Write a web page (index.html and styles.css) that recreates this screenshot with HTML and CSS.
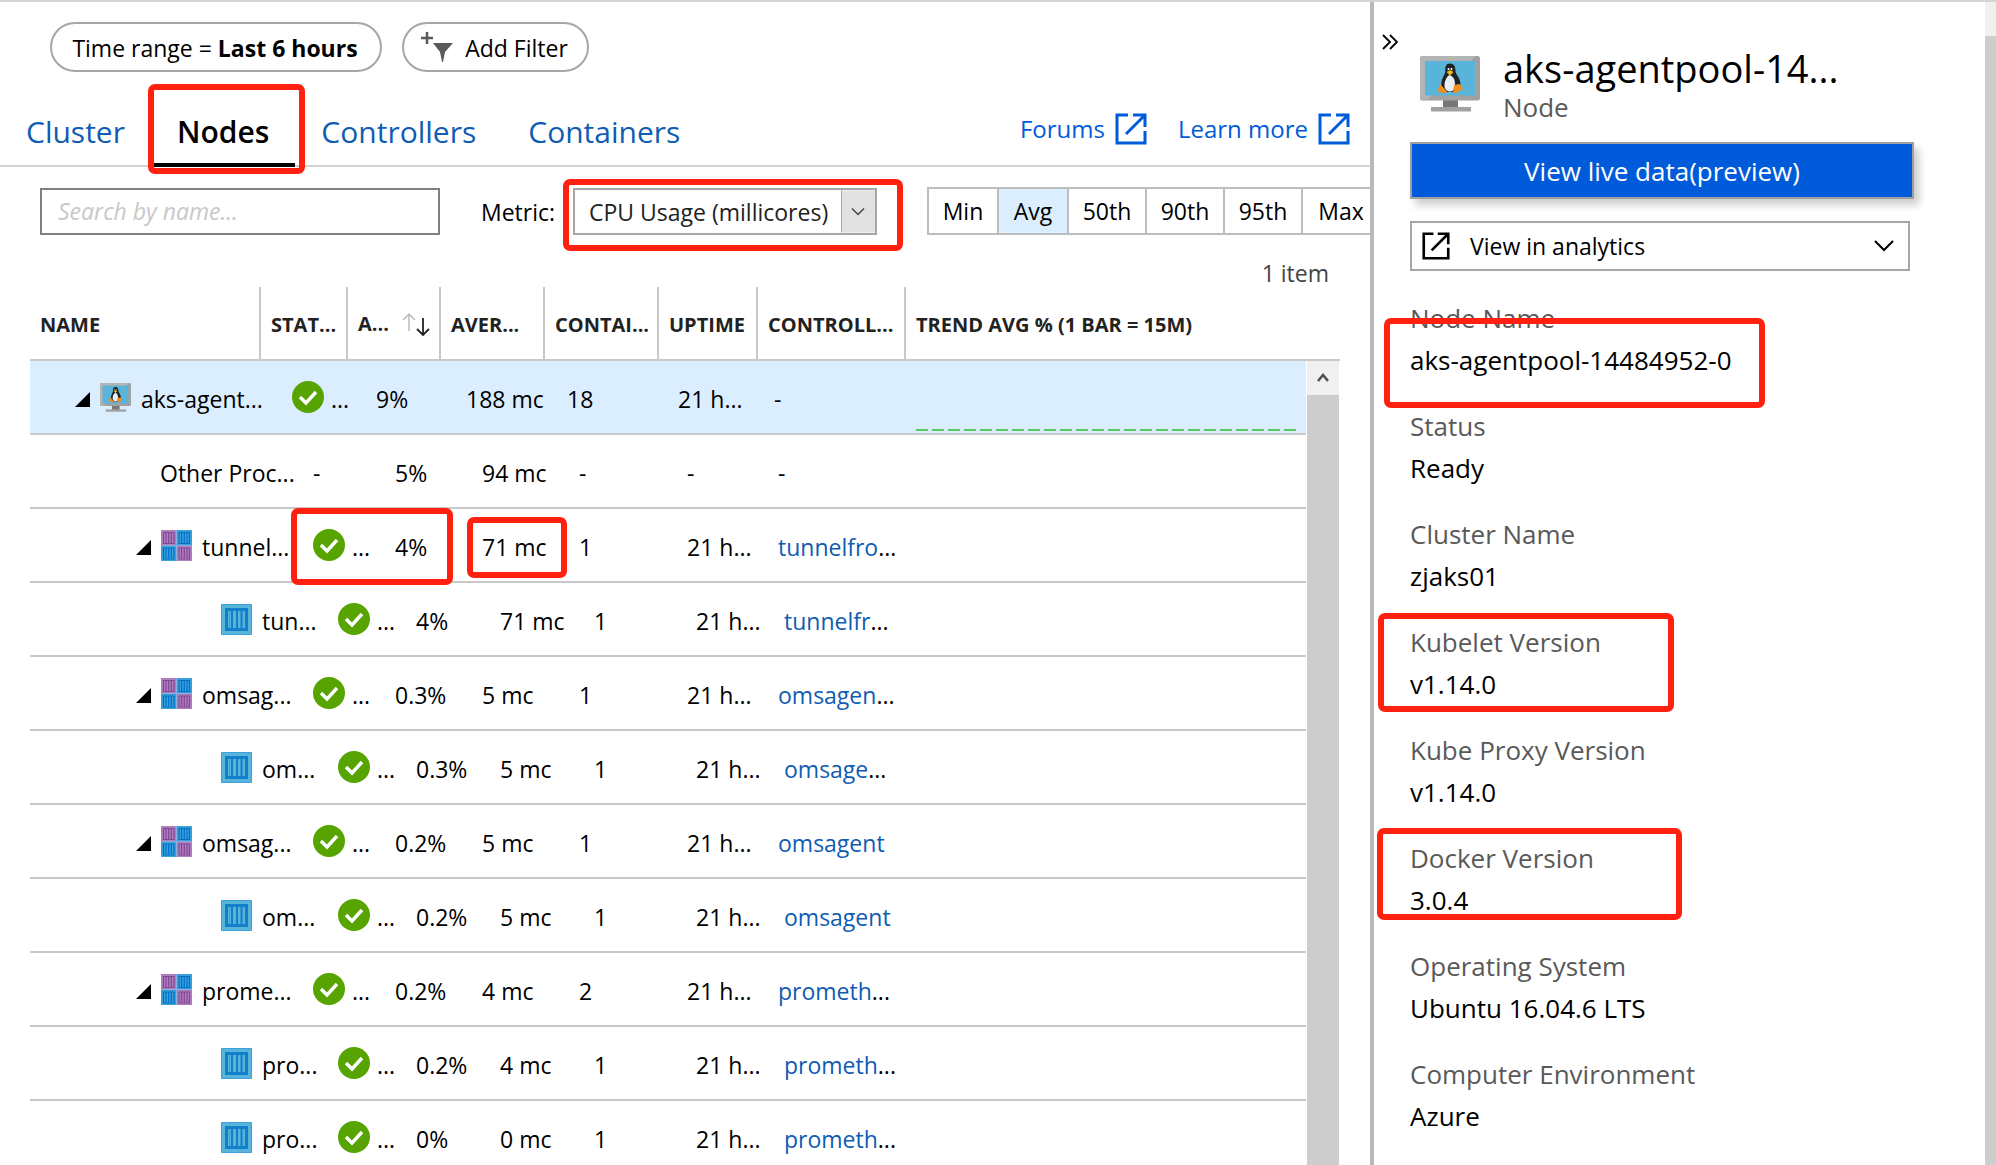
FILE: index.html
```html
<!DOCTYPE html>
<html lang="en">
<head>
<meta charset="utf-8">
<title>Container insights - Nodes</title>
<link rel="stylesheet" href="styles.css">
</head>
<body>
<svg class="sprite" aria-hidden="true">
  <symbol id="i-open" viewBox="0 0 32 32"><path d="M13 2H2v28h28V18M30 14V2H18M30 2 11 21" fill="none" stroke="currentColor" stroke-width="3"/></symbol>
  <symbol id="i-check" viewBox="0 0 32 32"><circle cx="16" cy="16" r="16" fill="#57a300"/><path d="m8 16 6 6L24 11" fill="none" stroke="#fff" stroke-width="3.4"/></symbol>
  <symbol id="i-tri" viewBox="0 0 15 15"><path d="M15 0v15H0z" fill="#000"/></symbol>
  <symbol id="i-node" viewBox="0 0 60 56">
    <path d="M23 44h15v8H23z" fill="#767676"/><path d="M11 51h40v4.500H11z" fill="#a0a1a2"/>
    <rect width="60" height="44.500" rx="2.500" fill="#a0a1a2"/><path d="M0 42V2.500Q0 0 2.500 0H56L6 44.500H2.500Q0 44.500 0 42z" fill="#b3b4b5"/>
    <path d="M5 5h50v34.500H5z" fill="#59b4d9"/><circle cx="30" cy="2.500" r="1" fill="#b8d432"/>
    <path d="M30 7.500c-4 0-5 3-4.700 7.500.2 3-3.800 7-4 13 0 4 1.700 7 3.200 8h11c2-1 5-4 5-8 0-6-4.700-9-5-13 0-4.500-1.500-7.500-5.500-7.500z" fill="#1f2326"/>
    <path d="M29.500 19c-2 1-5 5-5 10 0 4.500 2.500 6.500 5.500 6.500s5-2 5-7c0-5-2-8.500-5.500-9.500z" fill="#e9eef2"/>
    <circle cx="28.500" cy="13" r="1" fill="#fff"/><circle cx="31.500" cy="13" r="1" fill="#fff"/>
    <path d="m26.500 16 3.500-2 3.500 2-3.500 3.500z" fill="#f3b71b"/>
    <path d="m20 28 7 7.500-2 1.500-7-1 .5-3.500z" fill="#ef8e1c"/><path d="m34 29 6-1 3 5-7 4h-3z" fill="#ef8e1c"/>
  </symbol>
  <symbol id="i-pod" viewBox="0 0 31 31">
    <path d="M0 0h15.500v15.500H0zM15.500 15.500H31V31H15.500z" fill="#b07dbd"/>
    <path d="M15.500 0H31v15.500H15.500zM0 15.500h15.500V31H0z" fill="#3aa0dc"/>
    <path d="M2.500 2.500h10.500v11H2.500zM5 3v10M7.700 3v10M10.400 3v10M18 18h10.500v11H18zM20.600 18v10M23.300 18v10M26 18v10" fill="none" stroke="#804998" stroke-width="1.200"/>
    <path d="M18 2.500h10.500v11H18zM20.600 3v10M23.300 3v10M26 3v10M2.500 18h10.500v11H2.500zM5 18v10M7.700 18v10M10.400 18v10" fill="none" stroke="#0072c6" stroke-width="1.200"/>
  </symbol>
  <symbol id="i-box" viewBox="0 0 31 31">
    <path d="M.5.500h30v30H.5z" fill="#59b4d9" stroke="#3a9fdc"/>
    <path d="M4 4h23v23H4z" fill="#0072c6" opacity=".8"/>
    <path d="M7 7h3v17H7zM12 7h3v17h-3zM17 7h2.500v17H17zM21.500 7H24v17h-2.500z" fill="#59b4d9"/>
    <path d="M8 7h1v17H8z" fill="#3a9fdc"/>
  </symbol>
</svg>
<div class="shell">
  <main class="main">
    <div class="filters">
      <button class="pill">Time range = <b>Last 6 hours</b></button>
      <button class="pill pill-add">
        <svg class="funnel" viewBox="0 0 32 32" aria-hidden="true"><path d="M6 0v12M0 6h12" stroke="#5a5a5a" stroke-width="2.500" fill="none"/><path d="M12 11h20l-8 9-2 10h-1l-2-10z" fill="#5a5a5a"/></svg>Add Filter
      </button>
    </div>
    <div class="tabbar">
      <nav class="tabs">
        <a href="#cluster">Cluster</a>
        <a href="#nodes" class="active">Nodes<i class="mark mark-tab"></i></a>
        <a href="#controllers">Controllers</a>
        <a href="#containers">Containers</a>
      </nav>
      <div class="links">
        <a href="#forums">Forums <svg aria-hidden="true"><use href="#i-open"/></svg></a>
        <a href="#learn">Learn more <svg aria-hidden="true"><use href="#i-open"/></svg></a>
      </div>
    </div>
    <div class="tools">
      <input class="search" type="text" placeholder="Search by name..." aria-label="Search by name">
      <div class="metric">
        <label for="metric">Metric:</label>
        <div class="select">
          <select id="metric"><option>CPU Usage (millicores)</option></select>
          <svg viewBox="0 0 34 42" aria-hidden="true"><path d="M0 0h34v42H0z" fill="#e1e1e1"/><path d="M.5 0v42" stroke="#a6a6a6"/><path d="m11 18 6 6 6-6" fill="none" stroke="#444" stroke-width="1.500"/></svg>
          <i class="mark mark-metric"></i>
        </div>
      </div>
      <div class="segments" role="group" aria-label="Aggregation">
        <button>Min</button><button class="on" aria-pressed="true">Avg</button><button>50th</button><button>90th</button><button>95th</button><button>Max</button>
      </div>
    </div>
    <p class="count">1 item</p>
    <div class="grid">
      <table>
        <thead>
          <tr>
            <th>NAME</th><th>STAT...</th>
            <th class="sorted">A...<svg viewBox="0 0 28 24" aria-hidden="true"><path d="M7 19V2M1 8l6-6 6 6" fill="none" stroke="#bbb" stroke-width="1.500"/><path d="M21 6v17M15 17l6 6 6-6" fill="none" stroke="#222" stroke-width="1.800"/></svg></th>
            <th>AVER...</th><th>CONTAI...</th><th>UPTIME</th><th>CONTROLL...</th><th>TREND AVG % (1 BAR = 15M)</th>
          </tr>
        </thead>
        <tbody>
          <tr class="l0">
            <td><svg class="tri"><use href="#i-tri"/></svg><svg class="ico"><use href="#i-node"/></svg>aks-agent...</td>
            <td><svg class="ok"><use href="#i-check"/></svg>...</td><td>9%</td><td>188 mc</td><td>18</td><td>21 h...</td><td>-</td>
            <td class="trend"><svg viewBox="0 0 380 2" preserveAspectRatio="none" aria-label="Trend"><path d="M0 1h380" stroke="#5ec45e" stroke-width="2" stroke-dasharray="12 4"/></svg></td>
          </tr>
          <tr class="l1 plain"><td>Other Proc...</td><td>-</td><td>5%</td><td>94 mc</td><td>-</td><td>-</td><td>-</td><td></td></tr>
          <tr class="l1">
            <td><svg class="tri"><use href="#i-tri"/></svg><svg class="ico"><use href="#i-pod"/></svg>tunnel...</td>
            <td><svg class="ok"><use href="#i-check"/></svg>...<i class="mark mark-status"></i></td><td>4%</td><td>71 mc<i class="mark mark-usage"></i></td><td>1</td><td>21 h...</td><td><a href="#c1">tunnelfro</a>...</td><td></td>
          </tr>
          <tr class="l2">
            <td><svg class="ico"><use href="#i-box"/></svg>tun...</td>
            <td><svg class="ok"><use href="#i-check"/></svg>...</td><td>4%</td><td>71 mc</td><td>1</td><td>21 h...</td><td><a href="#c2">tunnelfr</a>...</td><td></td>
          </tr>
          <tr class="l1">
            <td><svg class="tri"><use href="#i-tri"/></svg><svg class="ico"><use href="#i-pod"/></svg>omsag...</td>
            <td><svg class="ok"><use href="#i-check"/></svg>...</td><td>0.3%</td><td>5 mc</td><td>1</td><td>21 h...</td><td><a href="#c3">omsagen</a>...</td><td></td>
          </tr>
          <tr class="l2">
            <td><svg class="ico"><use href="#i-box"/></svg>om...</td>
            <td><svg class="ok"><use href="#i-check"/></svg>...</td><td>0.3%</td><td>5 mc</td><td>1</td><td>21 h...</td><td><a href="#c4">omsage</a>...</td><td></td>
          </tr>
          <tr class="l1">
            <td><svg class="tri"><use href="#i-tri"/></svg><svg class="ico"><use href="#i-pod"/></svg>omsag...</td>
            <td><svg class="ok"><use href="#i-check"/></svg>...</td><td>0.2%</td><td>5 mc</td><td>1</td><td>21 h...</td><td><a href="#c5">omsagent</a></td><td></td>
          </tr>
          <tr class="l2">
            <td><svg class="ico"><use href="#i-box"/></svg>om...</td>
            <td><svg class="ok"><use href="#i-check"/></svg>...</td><td>0.2%</td><td>5 mc</td><td>1</td><td>21 h...</td><td><a href="#c6">omsagent</a></td><td></td>
          </tr>
          <tr class="l1">
            <td><svg class="tri"><use href="#i-tri"/></svg><svg class="ico"><use href="#i-pod"/></svg>prome...</td>
            <td><svg class="ok"><use href="#i-check"/></svg>...</td><td>0.2%</td><td>4 mc</td><td>2</td><td>21 h...</td><td><a href="#c7">prometh</a>...</td><td></td>
          </tr>
          <tr class="l2">
            <td><svg class="ico"><use href="#i-box"/></svg>pro...</td>
            <td><svg class="ok"><use href="#i-check"/></svg>...</td><td>0.2%</td><td>4 mc</td><td>1</td><td>21 h...</td><td><a href="#c8">prometh</a>...</td><td></td>
          </tr>
          <tr class="l2">
            <td><svg class="ico"><use href="#i-box"/></svg>pro...</td>
            <td><svg class="ok"><use href="#i-check"/></svg>...</td><td>0%</td><td>0 mc</td><td>1</td><td>21 h...</td><td><a href="#c9">prometh</a>...</td><td></td>
          </tr>
        </tbody>
      </table>
      <div class="scroll" aria-hidden="true"><svg viewBox="0 0 32 34"><path d="m11 20 5-6 5 6" fill="none" stroke="#505050" stroke-width="2.500"/></svg></div>
    </div>
  </main>
  <aside class="panel">
    <button class="collapse" aria-label="Collapse panel"><svg viewBox="0 0 16 16"><path d="m1 1 7 7-7 7M8 1l7 7-7 7" fill="none" stroke="#000" stroke-width="1.800"/></svg></button>
    <div class="details">
      <header>
        <svg class="node"><use href="#i-node"/></svg>
        <div><h1>aks-agentpool-14...</h1><p>Node</p></div>
      </header>
      <button class="live">View live data(preview)</button>
      <button class="analytics"><svg class="open"><use href="#i-open"/></svg>View in analytics<svg class="chev" viewBox="0 0 20 12"><path d="m1 1 9 9 9-9" fill="none" stroke="#000" stroke-width="2"/></svg></button>
      <dl>
        <div><dt>Node Name</dt><dd>aks-agentpool-14484952-0</dd><i class="mark mark-name"></i></div>
        <div><dt>Status</dt><dd>Ready</dd></div>
        <div><dt>Cluster Name</dt><dd>zjaks01</dd></div>
        <div><dt>Kubelet Version</dt><dd>v1.14.0</dd><i class="mark mark-kubelet"></i></div>
        <div><dt>Kube Proxy Version</dt><dd>v1.14.0</dd></div>
        <div><dt>Docker Version</dt><dd>3.0.4</dd><i class="mark mark-docker"></i></div>
        <div><dt>Operating System</dt><dd>Ubuntu 16.04.6 LTS</dd></div>
        <div><dt>Computer Environment</dt><dd>Azure</dd></div>
      </dl>
    </div>
    <div class="scroll" aria-hidden="true"></div>
  </aside>
</div>
</body>
</html>
```
FILE: styles.css
```css
* { box-sizing: border-box; }
body { margin: 0; font: 23px/32px "Open Sans", "Noto Sans", sans-serif; color: #000; background: #fff; }
button, input, select { font: inherit; color: inherit; }
button { background: none; border: 0; padding: 0; }
a { color: #0f5cb3; text-decoration: none; }
svg { flex: none; display: block; }
.sprite { position: absolute; width: 0; height: 0; }
.shell { display: grid; grid-template-columns: minmax(0, 1fr) 626px; height: 100vh; overflow: hidden; border-top: 2px solid #d4d4d4; }
.main { display: flex; flex-direction: column; min-width: 0; min-height: 0; overflow: hidden; }

.filters { display: flex; gap: 20px; padding: 20px 50px 0; }
.pill { display: flex; align-items: center; justify-content: center; gap: 6px; width: 332px; height: 50px; padding: 2px 2px 0 0; border: 2px solid #a6a6a6; border-radius: 25px; white-space: nowrap; }
.pill b { font-weight: 700; }
.pill-add { width: 187px; gap: 12px; }
.funnel { width: 32px; height: 32px; }

.tabbar { display: flex; justify-content: space-between; height: 95px; border-bottom: 2px solid #d4d4d4; }
.tabs { display: flex; }
.tabs a { position: relative; padding: 38px 26px 0; font-size: 30px; line-height: 44px; margin-bottom: -2px; }
.tabs .active { color: #000; font-weight: 600; border-bottom: 4px solid #000; }
.links { display: flex; gap: 31px; padding: 41px 20px 0 0; }
.links a { display: flex; align-items: center; gap: 10px; height: 32px; font-size: 24px; color: #005bda; }
.links svg { width: 32px; height: 32px; }

.tools { display: flex; padding: 20px 0 0 40px; height: 68px; }
.search { flex: none; width: 400px; height: 47px; border: 2px solid #808080; padding: 0 16px 2px; margin-top: 1px; }
.search::placeholder { color: #c8c8c8; font-style: italic; opacity: 1; }
.metric { display: grid; grid-template-columns: 92px 304px; align-items: center; height: 49px; margin-left: 41px; }
.select { position: relative; display: flex; }
.select select { appearance: none; width: 100%; height: 47px; border: 2px solid #a6a6a6; border-radius: 0; background: #fff; padding: 0 36px 0 14px; color: #222; }
.select svg { position: absolute; right: 2px; top: 2px; width: 34px; height: 43px; }
.segments { display: flex; flex: none; height: 48px; margin-left: 50px; border: 2px solid #bdbdbd; }
.segments button { width: 78px; border-right: 2px solid #bdbdbd; }
.segments button:nth-child(-n+2) { width: 70px; }
.segments .on { background: #dbeeff; }
.count { margin: 22px 41px 0 0; text-align: right; color: #444; }

.grid { display: flex; position: relative; margin: -2px 30px 0; flex: 1; min-height: 0; }
table { display: block; flex: 1; min-width: 0; }
thead, tbody { display: block; }
tr { display: grid; align-items: center; }
thead tr { grid-template-columns: 231px 87px 93px 104px 114px 99px 148px 1fr; height: 74px; border-bottom: 2px solid #c8c8c8; }
th { height: 72px; padding: 2px 0 0 10px; border-right: 2px solid #c8c8c8; text-align: left; font-size: 20px; line-height: 72px; font-weight: 700; color: #222; white-space: nowrap; }
th:last-child { border: 0; }
.sorted { display: flex; align-items: center; justify-content: space-between; padding-right: 9px; }
.sorted svg { width: 28px; height: 24px; }
tbody { margin-right: 34px; }
tbody tr { height: 74px; border-bottom: 2px solid #c8c8c8; }
td { position: relative; display: flex; align-items: center; height: 72px; padding: 4px 0 0; white-space: nowrap; }
.l0 { grid-template-columns: 262px 84px 90px 101px 111px 96px 142px 1fr; background: #dbeeff; }
.l1 { grid-template-columns: 283px 82px 87px 97px 108px 91px 138px 1fr; }
.l2 { grid-template-columns: 308px 78px 84px 94px 102px 88px 132px 1fr; }
.l0 td:first-child { padding-left: 45px; }
.l1 td:first-child { padding-left: 106px; }
.l2 td:first-child { padding-left: 191px; }
.plain td:first-child { padding-left: 130px; }
.tri { width: 15px; height: 15px; margin-right: 10px; }
.ico { width: 31px; height: 31px; margin: -4px 10px 0 0; }
.ok { width: 32px; height: 32px; margin: -4px 7px 0 0; }
.trend { align-items: flex-end; padding: 0 10px 2px 0; }
.trend svg { width: 100%; height: 2px; }
.scroll { background: #cdcdcd; }
.grid .scroll { width: 32px; margin: 74px 1px 0 -33px; }
.grid .scroll svg { width: 32px; height: 34px; background: #f0f0f0; }

.panel { display: grid; grid-template-columns: 36px 1fr 11px; border-left: 4px solid #b9b9b9; min-height: 0; }
.panel .scroll { border-top: 34px solid #f0f0f0; }
.collapse { width: 16px; height: 16px; margin: 32px 0 0 8px; }
.collapse svg { width: 16px; height: 16px; }
.details { display: flex; flex-direction: column; padding: 43px 71px 0 0; min-width: 0; font-size: 26px; }
header { display: flex; gap: 23px; height: 97px; padding-left: 10px; }
.node { width: 60px; height: 56px; margin-top: 11px; }
h1 { margin: 0; font-size: 38px; line-height: 46px; font-weight: 400; white-space: nowrap; }
header p { margin: 0; line-height: 32px; color: #595959; }
.live { height: 57px; border: 2px solid #a0a0a0; background: #005bda; color: #fff; box-shadow: 5px 6px 8px #ccc; }
.analytics { display: flex; align-items: center; height: 50px; margin: 22px 4px 0 0; padding: 0 14px 0 10px; border: 2px solid #a6a6a6; font-size: 23px; }
.open { width: 28px; height: 28px; margin-right: 20px; }
.chev { width: 20px; height: 12px; margin-left: auto; }
dl { margin: 26px 0 0; line-height: 42px; }
dl div { position: relative; height: 108px; }
dt { color: #595959; }
dd { margin: 0; }

.mark { position: absolute; z-index: 1; border: 6px solid #ff2010; border-radius: 7px; pointer-events: none; }
.mark-tab { left: -3px; right: -10px; top: 12px; bottom: -11px; }
.mark-metric { left: -10px; right: -26px; top: -9px; bottom: -16px; }
.mark-status { left: -22px; top: -1px; width: 162px; height: 77px; }
.mark-usage { left: -15px; top: 8px; width: 100px; height: 61px; }
.mark-name { left: -26px; top: 21px; width: 381px; height: 90px; }
.mark-kubelet { left: -32px; top: -8px; width: 296px; height: 99px; }
.mark-docker { left: -33px; top: -9px; width: 305px; height: 92px; }
```
